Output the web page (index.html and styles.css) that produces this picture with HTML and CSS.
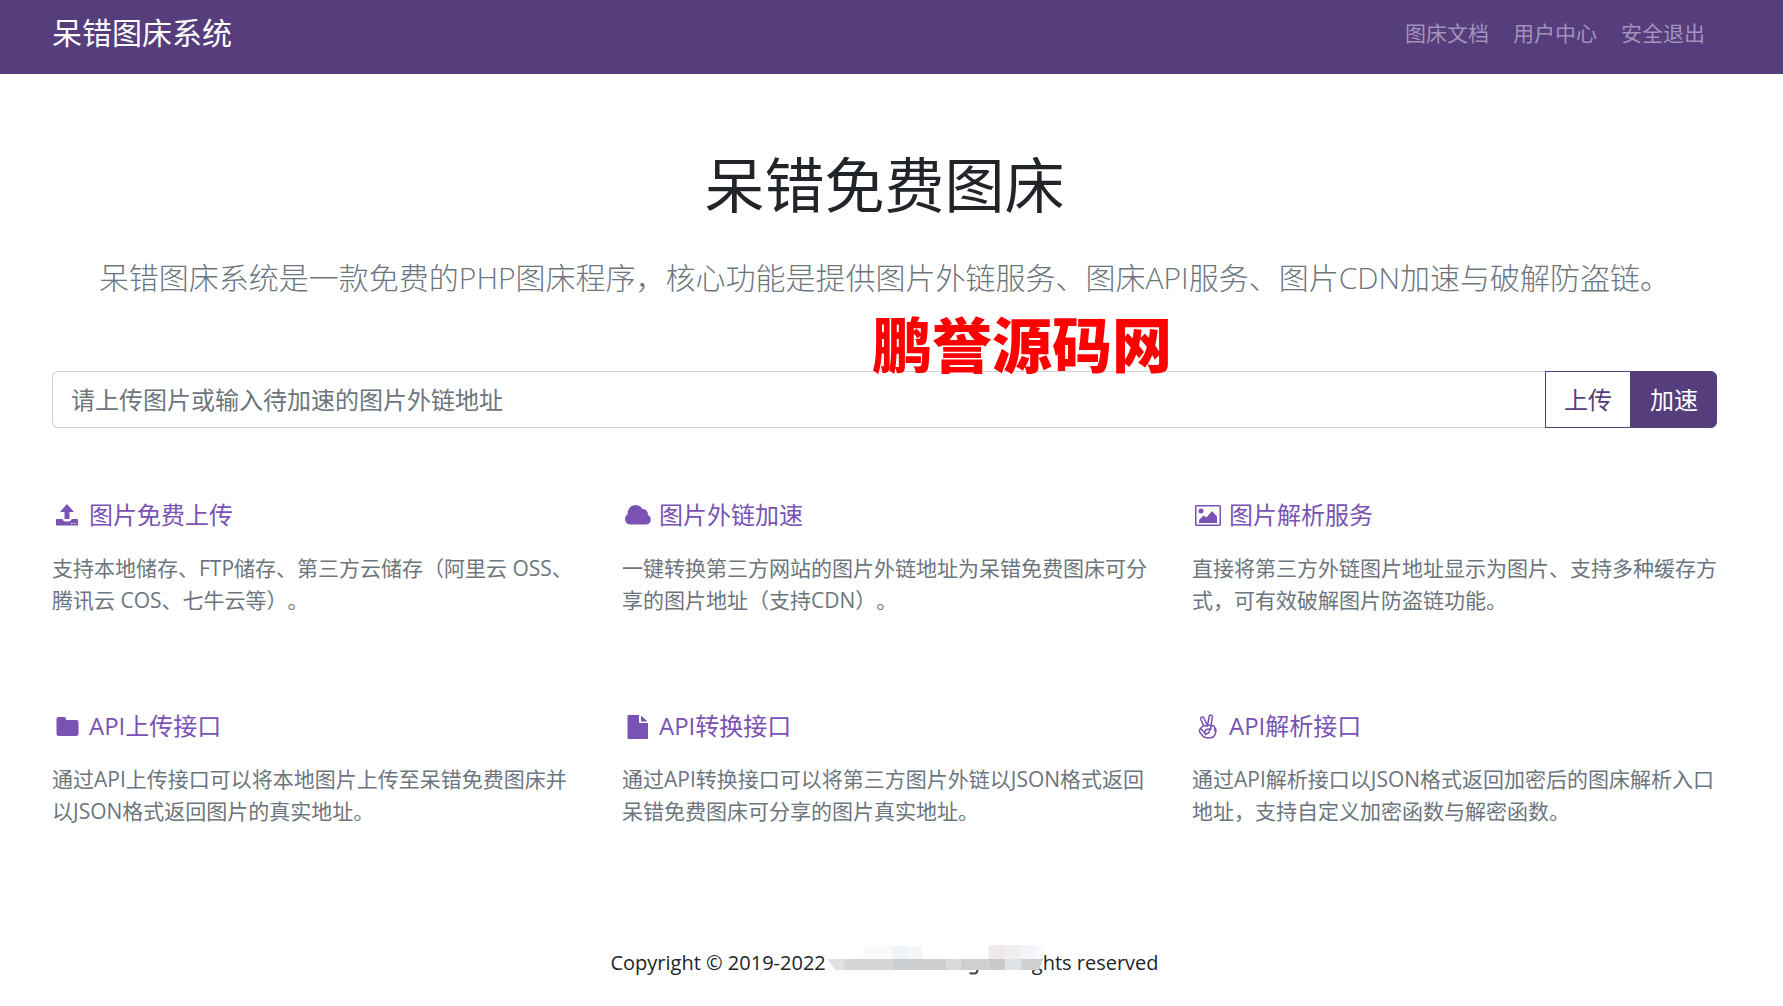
FILE: index.html
```html
<!DOCTYPE html>
<html lang="zh-CN">
<head>
<meta charset="utf-8">
<meta name="viewport" content="width=device-width, initial-scale=1">
<title>呆错图床系统</title>
<link rel="stylesheet" href="styles.css">
</head>
<body>
<header class="navbar">
  <a class="brand" href="#">呆错图床系统</a>
  <nav class="nav-links">
    <a href="#">图床文档</a>
    <a href="#">用户中心</a>
    <a href="#">安全退出</a>
  </nav>
</header>
<main class="page">
  <section class="hero">
    <h1>呆错免费图床</h1>
    <p class="lead">呆错图床系统是一款免费的PHP图床程序，核心功能是提供图片外链服务、图床API服务、图片CDN加速与破解防盗链。</p>
    <span class="watermark">鹏誉源码网</span>
  </section>
  <form class="upload">
    <input type="text" aria-label="图片地址" placeholder="请上传图片或输入待加速的图片外链地址">
    <button class="btn-outline" type="button">上传</button>
    <button class="btn-solid" type="button">加速</button>
  </form>
  <section class="features">
    <article>
      <h2><svg class="icon" viewBox="0 0 26 26"><path d="M12 2l7 8h-4.500v7h-5v-7H5zM2 17h5.500c.5 2 1.500 2.500 4.500 2.500s4-.5 4.500-2.500H22c.6 0 1 .4 1 1v4.500c0 .6-.4 1-1 1H2c-.6 0-1-.4-1-1V18c0-.6.4-1 1-1zm14 4v1h1.500v-1zm3 0v1h1.500v-1z"/></svg>图片免费上传</h2>
      <p>支持本地储存、FTP储存、第三方云储存（阿里云 OSS、腾讯云 COS、七牛云等）。</p>
    </article>
    <article>
      <h2><svg class="icon" viewBox="0 0 26 26"><path d="M5.500 22.500a5.500 5.500 0 0 1-2.800-10.200A8 8 0 0 1 17.500 7a5 5 0 0 1 5.300 6A5 5 0 0 1 21.500 22.500z"/></svg>图片外链加速</h2>
      <p>一键转换第三方网站的图片外链地址为呆错免费图床可分享的图片地址（支持CDN）。</p>
    </article>
    <article>
      <h2><svg class="icon" viewBox="0 0 26 26"><path fill-rule="evenodd" d="M1.500 3h23A1.500 1.500 0 0 1 26 4.500v18a1.500 1.500 0 0 1-1.500 1.500h-23A1.500 1.500 0 0 1 0 22.500v-18A1.500 1.500 0 0 1 1.500 3zm0 1.500v18h23v-18z"/><circle cx="6" cy="9" r="2.500"/><path d="M4 21v-3l4.500-4.500 3 2L17 9l5 5.500V21z"/></svg>图片解析服务</h2>
      <p>直接将第三方外链图片地址显示为图片、支持多种缓存方式，可有效破解图片防盗链功能。</p>
    </article>
    <article>
      <h2><svg class="icon" viewBox="0 0 26 26"><path d="M3.500 4H9a2 2 0 0 1 2 2v1h10.500A2 2 0 0 1 23.500 9v11.500a2.500 2.500 0 0 1-2.500 2.500H4a2.500 2.500 0 0 1-2.500-2.500V6a2 2 0 0 1 2-2z"/></svg>API上传接口</h2>
      <p>通过API上传接口可以将本地图片上传至呆错免费图床并以JSON格式返回图片的真实地址。</p>
    </article>
    <article>
      <h2><svg class="icon" viewBox="0 0 26 26"><path d="M3.500 2H14v7a1 1 0 0 0 1 1h8v15a1 1 0 0 1-1 1H3.500a1 1 0 0 1-1-1V3a1 1 0 0 1 1-1zM16 2.500L22.500 8.500H16z"/></svg>API转换接口</h2>
      <p>通过API转换接口可以将第三方图片外链以JSON格式返回呆错免费图床可分享的图片真实地址。</p>
    </article>
    <article>
      <h2><svg class="icon" viewBox="0 0 26 26"><g fill="none" stroke="currentColor" stroke-width="1.500" stroke-linejoin="round" stroke-linecap="round"><path d="M8.500 12.500L5.800 6.300c-.8-2 2-3.300 3-1.300l3.700 7.500 1.700-9c.5-2.200 3.500-1.700 3.200.6L16 12.500"/><path d="M12.500 13c1-1.500 3-1 3.300.5 1-1.500 4-1 4 1.500 1.700.8 1.200 3.500.4 6-.8 2.800-3 4-6.700 4s-5-.8-6.500-3l-2-2.500c-1-1.500-.8-2.500.5-4l3-3 4 .5"/><path d="M15.800 13.500v3M19.800 15v3M6 16l3.500 3.500M9.500 20l1.500-3.500 4-.5-1 3.500-3.500 2z"/></g></svg>API解析接口</h2>
      <p>通过API解析接口以JSON格式返回加密后的图床解析入口地址，支持自定义加密函数与解密函数。</p>
    </article>
  </section>
</main>
<footer class="footer">
  <span>Copyright © 2019-2022</span>
  <svg class="mosaic" viewBox="0 0 220 36">
    <g transform="scale(1.120 1)">
      <path fill="#fafafa" d="M35 1h26v13H35zM187 1h9v13h-9z"/>
      <path fill="#f0f2fa" d="M61 1h13v13H61z"/>
      <path fill="#f6f6f9" d="M74 1h14v13H74z"/>
      <path fill="#eee9ec" d="M147 0h15v14h-15z"/>
      <path fill="#efefef" d="M162 0h14v14h-14z"/>
      <path fill="#f2f4f8" d="M176 0h13v14h-13z"/>
      <path fill="#e0e0e2" d="M3 14h15v11H10z"/>
      <path fill="#d6d6d6" d="M18 14h43v11H18z"/>
      <path fill="#c9cdd4" d="M61 14h13v11H61z"/>
      <path fill="#cecece" d="M74 14h35v11H74z"/>
      <path fill="#dbdbdb" d="M109 14h13v11h-13z"/>
      <path fill="#d0cfd0" d="M122 14h25v11h-25z"/>
      <path fill="#c9c9cb" d="M147 14h15v11h-15z"/>
      <path fill="#dfe2e6" d="M162 14h14v11h-14z"/>
      <path fill="#d0d0d2" d="M176 14h19l-3 11h-16z"/>
      <path fill="none" stroke="#454a50" stroke-width="2" d="M130 28q7 2 7-3"/>
    </g>
  </svg>
  <span>ghts reserved</span>
</footer>
</body>
</html>
```
FILE: styles.css
```css
* {
  box-sizing: border-box;
}

body {
  margin: 0;
  background: #fff;
  color: #212529;
  font-family: "Open Sans", "Noto Sans CJK SC", sans-serif;
  font-size: 21px;
  line-height: 32px;
  text-spacing-trim: space-all;
}

a {
  color: inherit;
  text-decoration: none;
}

.navbar {
  display: flex;
  align-items: center;
  justify-content: space-between;
  padding: 7px 78px 15px 52px;
  background: #563d7c;
}

.brand {
  color: #fff;
  font-size: 30px;
  line-height: 52px;
}

.nav-links {
  display: flex;
  gap: 24px;
  color: #a393ba;
}

.page {
  padding: 63px 66px 0 52px;
}

.hero {
  position: relative;
  text-align: center;
}

h1 {
  margin: 0;
  font-size: 60px;
  font-weight: 400;
  line-height: 96px;
}

.lead {
  margin: 21px 0 0;
  color: #6c757d;
  font-size: 30px;
  font-weight: 300;
  line-height: 48px;
}

.watermark {
  position: absolute;
  top: 178px;
  left: 820px;
  color: #f00;
  font-size: 60px;
  font-weight: 900;
  line-height: 60px;
  white-space: nowrap;
}

.upload {
  display: flex;
  margin-top: 69px;
}

.upload input,
.upload button {
  height: 57px;
  padding: 0 18px;
  font: inherit;
  font-size: 24px;
}

.upload input {
  flex: 1;
  min-width: 0;
  border: 1px solid #ced4da;
  border-right: 0;
  border-radius: 6px 0 0 6px;
  background: #fff;
}

.upload input::placeholder {
  color: #6c757d;
  opacity: 1;
}

.upload button {
  border: 1px solid #563d7c;
}

.upload .btn-outline {
  background: #fff;
  color: #563d7c;
}

.upload .btn-solid {
  border-radius: 0 6px 6px 0;
  background: #563d7c;
  color: #fff;
}

.features {
  display: grid;
  grid-template-columns: repeat(3, 1fr);
  gap: 90px 45px;
  margin-top: 67px;
}

h2 {
  display: flex;
  align-items: center;
  gap: 8px;
  margin: 0;
  padding-left: 3px;
  color: #7952b3;
  font-size: 24px;
  font-weight: 400;
  line-height: 40px;
}

.icon {
  width: 26px;
  height: 26px;
  fill: currentColor;
}

.features p {
  margin: 17px 0 0;
  color: #6c757d;
}

.footer {
  display: flex;
  align-items: center;
  justify-content: center;
  margin-top: 118px;
  padding: 0 14px 20px 0;
  font-size: 20px;
}

.mosaic {
  position: relative;
  width: 220px;
  height: 36px;
  margin: 0 -12px 0 -2px;
}
```
